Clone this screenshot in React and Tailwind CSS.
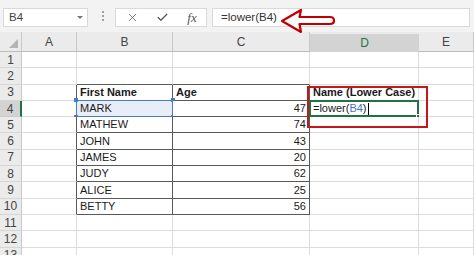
import React from "react";
import { X, Check } from "lucide-react";

const COLS = ["A", "B", "C", "D", "E"];
const data = {
  3: { B: "First Name", C: "Age", D: "Name (Lower Case)" },
  4: { B: "MARK", C: "47" },
  5: { B: "MATHEW", C: "74" },
  6: { B: "JOHN", C: "43" },
  7: { B: "JAMES", C: "20" },
  8: { B: "JUDY", C: "62" },
  9: { B: "ALICE", C: "25" },
  10: { B: "BETTY", C: "56" },
};

function inTable(r, c) {
  return r >= 3 && r <= 10 && (c === "B" || c === "C");
}

function cellBorder(r, c) {
  const darkR = inTable(r, c) || (c === "A" && r >= 3 && r <= 10);
  const darkB = inTable(r, c) || (r === 2 && (c === "B" || c === "C"));
  const rc = darkR ? "border-r-[#5a5a5a]" : "border-r-[#dcdcdc]";
  const bc = darkB ? "border-b-[#5a5a5a]" : "border-b-[#dcdcdc]";
  return `${rc} ${bc}`;
}

function Cell({ r, c }) {
  const d = data[r] || {};
  const val = d[c];
  const bold = r === 3;
  const isNum = c === "C" && r > 3;
  const isB4 = r === 4 && c === "B";
  const isD4 = r === 4 && c === "D";
  return (
    <div
      className={`relative flex items-center border-r border-b ${cellBorder(r, c)} ${
        isB4 ? "bg-[#e8eef7]" : "bg-white"
      } ${isNum ? "justify-end pr-[3px]" : "pl-[3px]"} text-[11px] leading-none text-[#1a1a1a] whitespace-nowrap`}
    >
      {val && <span className={bold ? "font-bold" : ""}>{val}</span>}
      {isD4 && (
        <span className="flex items-center">
          <span>=lower(</span>
          <span className="text-[#4472c4]">B4</span>
          <span>)</span>
          <span className="ml-[1px] inline-block h-[12px] w-[1px] bg-black" />
        </span>
      )}
      {isB4 && (
        <>
          <div className="pointer-events-none absolute left-[-1px] top-[-1px] right-[-1px] bottom-[-1px] border border-[#4a7bc4]" />
          <div className="absolute left-[-3px] top-[-3px] h-[4px] w-[4px] bg-[#4a7bc4]" />
          <div className="absolute right-[-3px] top-[-3px] h-[4px] w-[4px] bg-[#4a7bc4]" />
          <div className="absolute left-[-3px] bottom-[-3px] h-[4px] w-[4px] bg-[#4a7bc4]" />
          <div className="absolute right-[-3px] bottom-[-3px] h-[4px] w-[4px] bg-[#4a7bc4]" />
        </>
      )}
      {isD4 && (
        <>
          <div className="pointer-events-none absolute left-[-1px] top-[-1px] right-[-1px] bottom-[-1px] border-2 border-[#217346]" />
          <div className="absolute right-[-3px] bottom-[-3px] h-[5px] w-[5px] border border-white bg-[#217346]" />
        </>
      )}
    </div>
  );
}

export default function App() {
  const rows = Array.from({ length: 13 }, (_, i) => i + 1);
  return (
    <div
      className="relative h-[255px] w-[474px] overflow-hidden bg-white"
      style={{ fontFamily: '"Liberation Sans", Arial, sans-serif' }}
    >
      {/* Toolbar */}
      <div className="flex h-[32px] items-start bg-[#f3f3f3] pt-[8px]">
        <div className="ml-[3px] flex h-[19px] w-[85px] items-center justify-between border border-[#d9d9d9] bg-white pl-[5px] pr-[4px]">
          <span className="text-[11.5px] text-[#444]">B4</span>
          <span className="h-0 w-0 border-x-[3px] border-t-[3px] border-x-transparent border-t-[#777]" />
        </div>
        <div className="ml-[14px] mt-[3px] flex flex-col gap-[2px]">
          <span className="h-[2px] w-[2px] bg-[#a0a0a0]" />
          <span className="h-[2px] w-[2px] bg-[#a0a0a0]" />
          <span className="h-[2px] w-[2px] bg-[#a0a0a0]" />
        </div>
        <div className="ml-[11px] flex h-[19px] w-[92px] items-center border border-[#d9d9d9] bg-white">
          <div className="flex w-[31px] justify-center pl-[2px]">
            <X size={13} strokeWidth={1.4} color="#555" />
          </div>
          <div className="flex w-[31px] justify-center">
            <Check size={13} strokeWidth={2.2} color="#555" />
          </div>
          <div className="flex w-[28px] justify-center">
            <span
              className="text-[13px] italic leading-none text-[#555]"
              style={{ fontFamily: '"Liberation Serif", serif' }}
            >
              fx
            </span>
          </div>
        </div>
        <div className="ml-[5px] flex h-[19px] w-[258px] items-center border border-[#d9d9d9] bg-white pl-[8px]">
          <span className="text-[11.5px] text-[#333]">=lower(B4)</span>
        </div>
      </div>

      {/* Grid */}
      <div className="grid grid-cols-[22px_55px_96px_137px_109px_55px] grid-rows-[20px_repeat(13,16.3px)]">
        {/* Header row */}
        <div className="relative border-r border-b border-r-[#c8c8c8] border-b-[#bdbdbd] bg-[#ebebeb]">
          <div
            className="absolute bottom-[3px] right-[3px] h-[9px] w-[9px] bg-[#b4b4b4]"
            style={{ clipPath: "polygon(100% 0, 100% 100%, 0 100%)" }}
          />
        </div>
        {COLS.map((c) =>
          c === "D" ? (
            <div key={c} className="flex flex-col bg-[#ebebeb]">
              <div className="mt-[2px] flex flex-1 items-center justify-center border-b-2 border-b-[#217346] bg-[#d3d3d3] text-[12px] text-[#217346]">
                {c}
              </div>
            </div>
          ) : (
            <div
              key={c}
              className="flex items-center justify-center border-r border-b border-r-[#c8c8c8] border-b-[#bdbdbd] bg-[#ebebeb] text-[12px] text-[#444]"
            >
              {c}
            </div>
          )
        )}
        {rows.map((r) => (
          <React.Fragment key={r}>
            <div
              className={`flex items-center justify-center border-b text-[12px] text-[#444] ${
                r === 4
                  ? "border-r-2 border-r-[#217346] bg-[#d3d3d3] border-b-[#c8c8c8]"
                  : "border-r border-r-[#c8c8c8] bg-[#ebebeb] border-b-[#d6d6d6]"
              }`}
            >
              {r}
            </div>
            {COLS.map((c) => (
              <Cell key={c} r={r} c={c} />
            ))}
          </React.Fragment>
        ))}
      </div>

      {/* Red annotation rectangle */}
      <div className="pointer-events-none absolute left-[307px] top-[86px] h-[42px] w-[121px] border-2 border-[#c4161c]" />

      {/* Red arrow */}
      <svg
        className="absolute left-[280px] top-[8px]"
        width="58"
        height="27"
        viewBox="0 0 58 27"
      >
        <path
          d="M2,13 L21,2 L19.5,9 L50,9 Q54,9 54,12.5 Q54,16 50,16 L19.5,16 L21,24 Z"
          fill="white"
          stroke="#c00000"
          strokeWidth="2.2"
          strokeLinejoin="round"
        />
      </svg>
    </div>
  );
}
